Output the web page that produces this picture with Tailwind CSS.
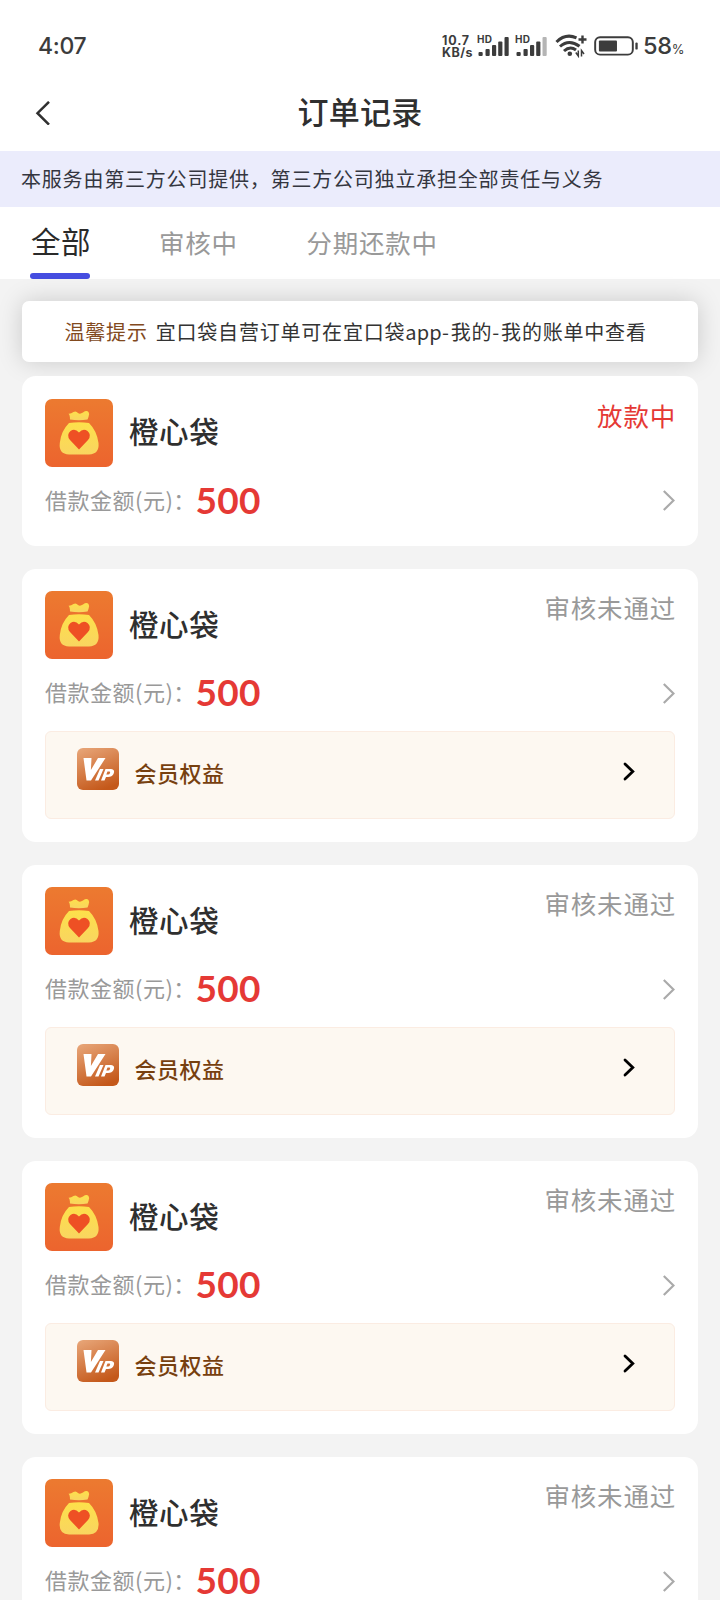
<!DOCTYPE html>
<html lang="zh-CN">
<head>
<meta charset="utf-8">
<title>订单记录</title>
<script src="https://cdn.jsdelivr.net/npm/@tailwindcss/browser@4"></script>
</head>
<body class="w-[720px] h-[1600px] overflow-hidden bg-[#f3f3f3] font-['Noto_Sans_CJK_SC',sans-serif] text-[#2f2f2f]">
<svg width="0" height="0" class="absolute">
  <defs>
    <linearGradient id="orange" x1="0" y1="0" x2="0" y2="1"><stop offset="0" stop-color="#ec7a30"/><stop offset="1" stop-color="#ec642e"/></linearGradient>
    <linearGradient id="gold" x1="0" y1="0" x2="0" y2="1"><stop offset="0" stop-color="#fde04a"/><stop offset="1" stop-color="#f9d560"/></linearGradient>
    <linearGradient id="bronze" x1="0.2" y1="0" x2="0.6" y2="1"><stop offset="0" stop-color="#e6a274"/><stop offset="1" stop-color="#c4581a"/></linearGradient>
  </defs>
</svg>
<div class="flex h-[1600px] flex-col overflow-hidden">
  <!-- status bar -->
  <div class="flex h-[76px] shrink-0 items-center justify-between bg-white pl-[38px] pr-[36px] pt-[16px] font-['Inter',sans-serif] text-[#3c3c3c]">
    <span class="text-[23px] font-medium tracking-[-0.3px]">4:07</span>
    <div class="flex items-center">
      <div class="mr-[4px] w-[31px] whitespace-nowrap pt-[2px] text-[12.5px] font-bold leading-[12.5px]"><div class="tracking-[0.8px]">10.7</div><div class="tracking-[0.4px]">KB/s</div></div>
      <svg class="mr-[6px]" width="32" height="22" viewBox="0 0 32 22" fill="#3c3c3c"><text x="0" y="8" font-size="10" font-weight="700" textLength="15">HD</text><rect x="1.500" y="17" width="4.200" height="4" rx="1"/><rect x="8.500" y="14" width="4.200" height="7" rx="1"/><rect x="15" y="10" width="4.200" height="11" rx="1"/><rect x="21.200" y="6.500" width="4.200" height="14.500" rx="1"/><rect x="27.500" y="2" width="4.200" height="19" rx="1"/></svg>
      <svg class="mr-[8px]" width="32" height="22" viewBox="0 0 32 22" fill="#3c3c3c"><text x="0" y="8" font-size="10" font-weight="700" textLength="15">HD</text><rect x="1.500" y="17" width="4.200" height="4" rx="1"/><rect x="8.500" y="14" width="4.200" height="7" rx="1"/><rect x="15" y="10" width="4.200" height="11" rx="1"/><rect x="21.200" y="6.500" width="4.200" height="14.500" rx="1"/><rect x="27.500" y="2" width="4.200" height="19" rx="1" fill="#b5b5b5"/></svg>
      <svg class="mr-[7px]" width="32" height="24" viewBox="0 0 32 24" fill="none" stroke="#3c3c3c" stroke-width="3"><path d="M1.500 8Q10.500-1 21.500 3.800M5 12.500Q14 4.500 24.500 12.300M9 17Q15 11.500 21 16"/><circle cx="14.800" cy="19.800" r="2.300" fill="#3c3c3c" stroke="none"/><path d="M23.500 5.500h8M27.500 1.500v8" stroke-width="2.400"/><path d="M20.800 18.500L23.300 22V16.500M26.500 22.500v-6l2.500 3.500" stroke-width="1.500"/></svg>
      <svg class="mr-[5px]" width="44" height="22" viewBox="0 0 45 22" fill="none" stroke="#3c3c3c"><rect x="1.200" y="2" width="38.500" height="17.800" rx="5" stroke-width="2"/><rect x="5" y="5.500" width="18.500" height="11" rx="1" fill="#3c3c3c" stroke="none"/><path d="M43.500 8.500v5" stroke-width="2.400" stroke-linecap="round"/></svg>
      <span class="pt-[2px] text-[23.5px] font-medium leading-[24px] tracking-[-0.4px]">58<span class="text-[13px] font-normal">%</span></span>
    </div>
  </div>
  <!-- title bar -->
  <header class="grid h-[74.5px] shrink-0 grid-cols-3 items-center bg-white px-[35px]">
    <svg width="16" height="24" viewBox="0 0 16 24" fill="none" stroke="#303030" stroke-width="2.500"><path d="M14 .800L2.500 12.200L14 23.600"/></svg>
    <h1 class="pb-[5px] text-center text-[31px] font-medium leading-[69px] tracking-[0.3px] whitespace-nowrap">订单记录</h1>
  </header>
  <div class="flex h-[56.5px] shrink-0 items-center bg-[#ebecfc] pl-[21px] text-[20px] tracking-[0.8px] text-[#343640]">本服务由第三方公司提供，第三方公司独立承担全部责任与义务</div>
  <nav class="flex h-[72px] shrink-0 bg-white pl-[30px] text-[25.5px] text-[#999] tracking-[0.7px]">
    <div class="flex w-[60px] flex-col justify-between text-[29.5px] text-[#2a2a2a]"><span class="pl-[1px] leading-[66px] h-[66px] tracking-[0.5px] whitespace-nowrap">全部</span><i class="block h-[6px] shrink-0 rounded-full bg-[#454de0]"></i></div>
    <span class="ml-[69px] leading-[70px]">审核中</span>
    <span class="ml-[69px] leading-[70px]">分期还款中</span>
  </nav>
  <main class="flex flex-col pl-[22px] pr-[22px] pt-[22px]">
    <div class="flex h-[61px] shrink-0 items-center gap-[8px] rounded-[7px] bg-white pl-[42.5px] text-[20px] tracking-[0.8px] shadow-[0_0_24px_rgba(0,0,0,0.17)]">
      <span class="text-[#824a1e]">温馨提示</span><span class="whitespace-nowrap text-[#333]">宜口袋自营订单可在宜口袋<span class="tracking-[0.2px]">app</span><span class="tracking-[1.8px]">-</span>我的<span class="tracking-[1.8px]">-</span>我的账单中查看</span>
    </div>
    <div id="orders" class="relative mt-[14px] flex flex-col gap-[23px]"></div>
  </main>
</div>
<script>
const orders = [
  { status: '放款中', active: true },
  { status: '审核未通过' }, { status: '审核未通过' }, { status: '审核未通过' }, { status: '审核未通过' }
];
const vip = `
  <div class="mt-[15.5px] flex h-[88px] items-start justify-between rounded-[6px] border border-[#fbece2] bg-[#fdf8f1] pl-[30.5px] pr-[39px]">
    <div class="flex">
      <svg class="mt-[16px]" width="42" height="42" viewBox="0 0 42 42"><rect width="42" height="42" rx="6" fill="url(#bronze)"/><g fill="#fff"><path d="M6.500 10h8l-.600 12L21 10h7.500L14 32.500H9.500z"/><path d="M23 21h3.500l-5 11.500H18zM28.500 21h5.500q4.500.500 2.500 5-1.500 3-5.500 3h-2l-1.500 3.500H24zM30.500 23.500l-1.200 3h1.700q1.500 0 2-1.500.500-1.500-.500-1.500z" fill-rule="evenodd"/></g></svg>
      <span class="ml-[16px] mt-[22.5px] text-[22px] font-medium leading-[36px] tracking-[0.5px] text-[#77400f]">会员权益</span>
    </div>
    <svg class="mt-[30px]" width="12" height="19" viewBox="0 0 12 19" fill="none" stroke="#000" stroke-width="2.800" stroke-linecap="round"><path d="M2 2L9.800 9.500L2 17"/></svg>
  </div>`;
document.getElementById('orders').innerHTML = orders.map(o => `
  <section class="shrink-0 rounded-[14px] bg-white px-[23px] pb-[23px] pt-[22.5px]">
    <div class="flex h-[68px] justify-between">
      <div class="flex items-center">
        <svg width="68" height="68" viewBox="0 0 68 68"><rect width="68" height="68" rx="7" fill="url(#orange)"/><path d="M25 20.500Q25 16 23.500 14.800Q26 15 28.500 13Q31 11.500 33 14Q35 15.500 38 13.500Q41.500 11 43.500 13Q45 15 43.500 18L42.500 20.500Q34 21.800 25 20.500z" fill="url(#gold)"/><path d="M24 24Q34 22.500 44 24Q52 32 53.500 44Q54.500 55 44 55.500H24Q13.500 55 14.800 44Q16 32 24 24z" fill="url(#gold)"/><path d="M34 50.500L25 41Q21 36 25.500 32Q30 29 34 33.500Q38 29 42.500 32Q47 36 43 41z" fill="#ee5024"/></svg>
        <h2 class="ml-[16px] pb-[5px] text-[29.5px] font-medium leading-[58px] tracking-[0.6px]">橙心袋</h2>
      </div>
      <span class="-mr-[1px] text-[25.5px] leading-[32px] tracking-[0.8px] ${o.active ? 'text-[#e53935]' : 'text-[#999]'}">${o.status}</span>
    </div>
    <div class="mt-[12px] flex h-[44px] items-center justify-between">
      <div class="flex items-center"><span class="w-[150.5px] whitespace-nowrap pb-[3px] text-[22px] tracking-[0.5px] text-[#999]">借款金额(元)：</span><strong class="font-['Lato',sans-serif] pb-[3px] text-[37px] font-bold leading-[41px] tracking-[0.3px] text-[#e53935]">500</strong></div>
      <svg width="12" height="21" viewBox="0 0 12 21" fill="none" stroke="#aaa" stroke-width="2.200"><path d="M.800 1L10.500 10.500L.800 20"/></svg>
    </div>
    ${o.active ? '' : vip}
  </section>`).join('');
</script>
</body>
</html>
